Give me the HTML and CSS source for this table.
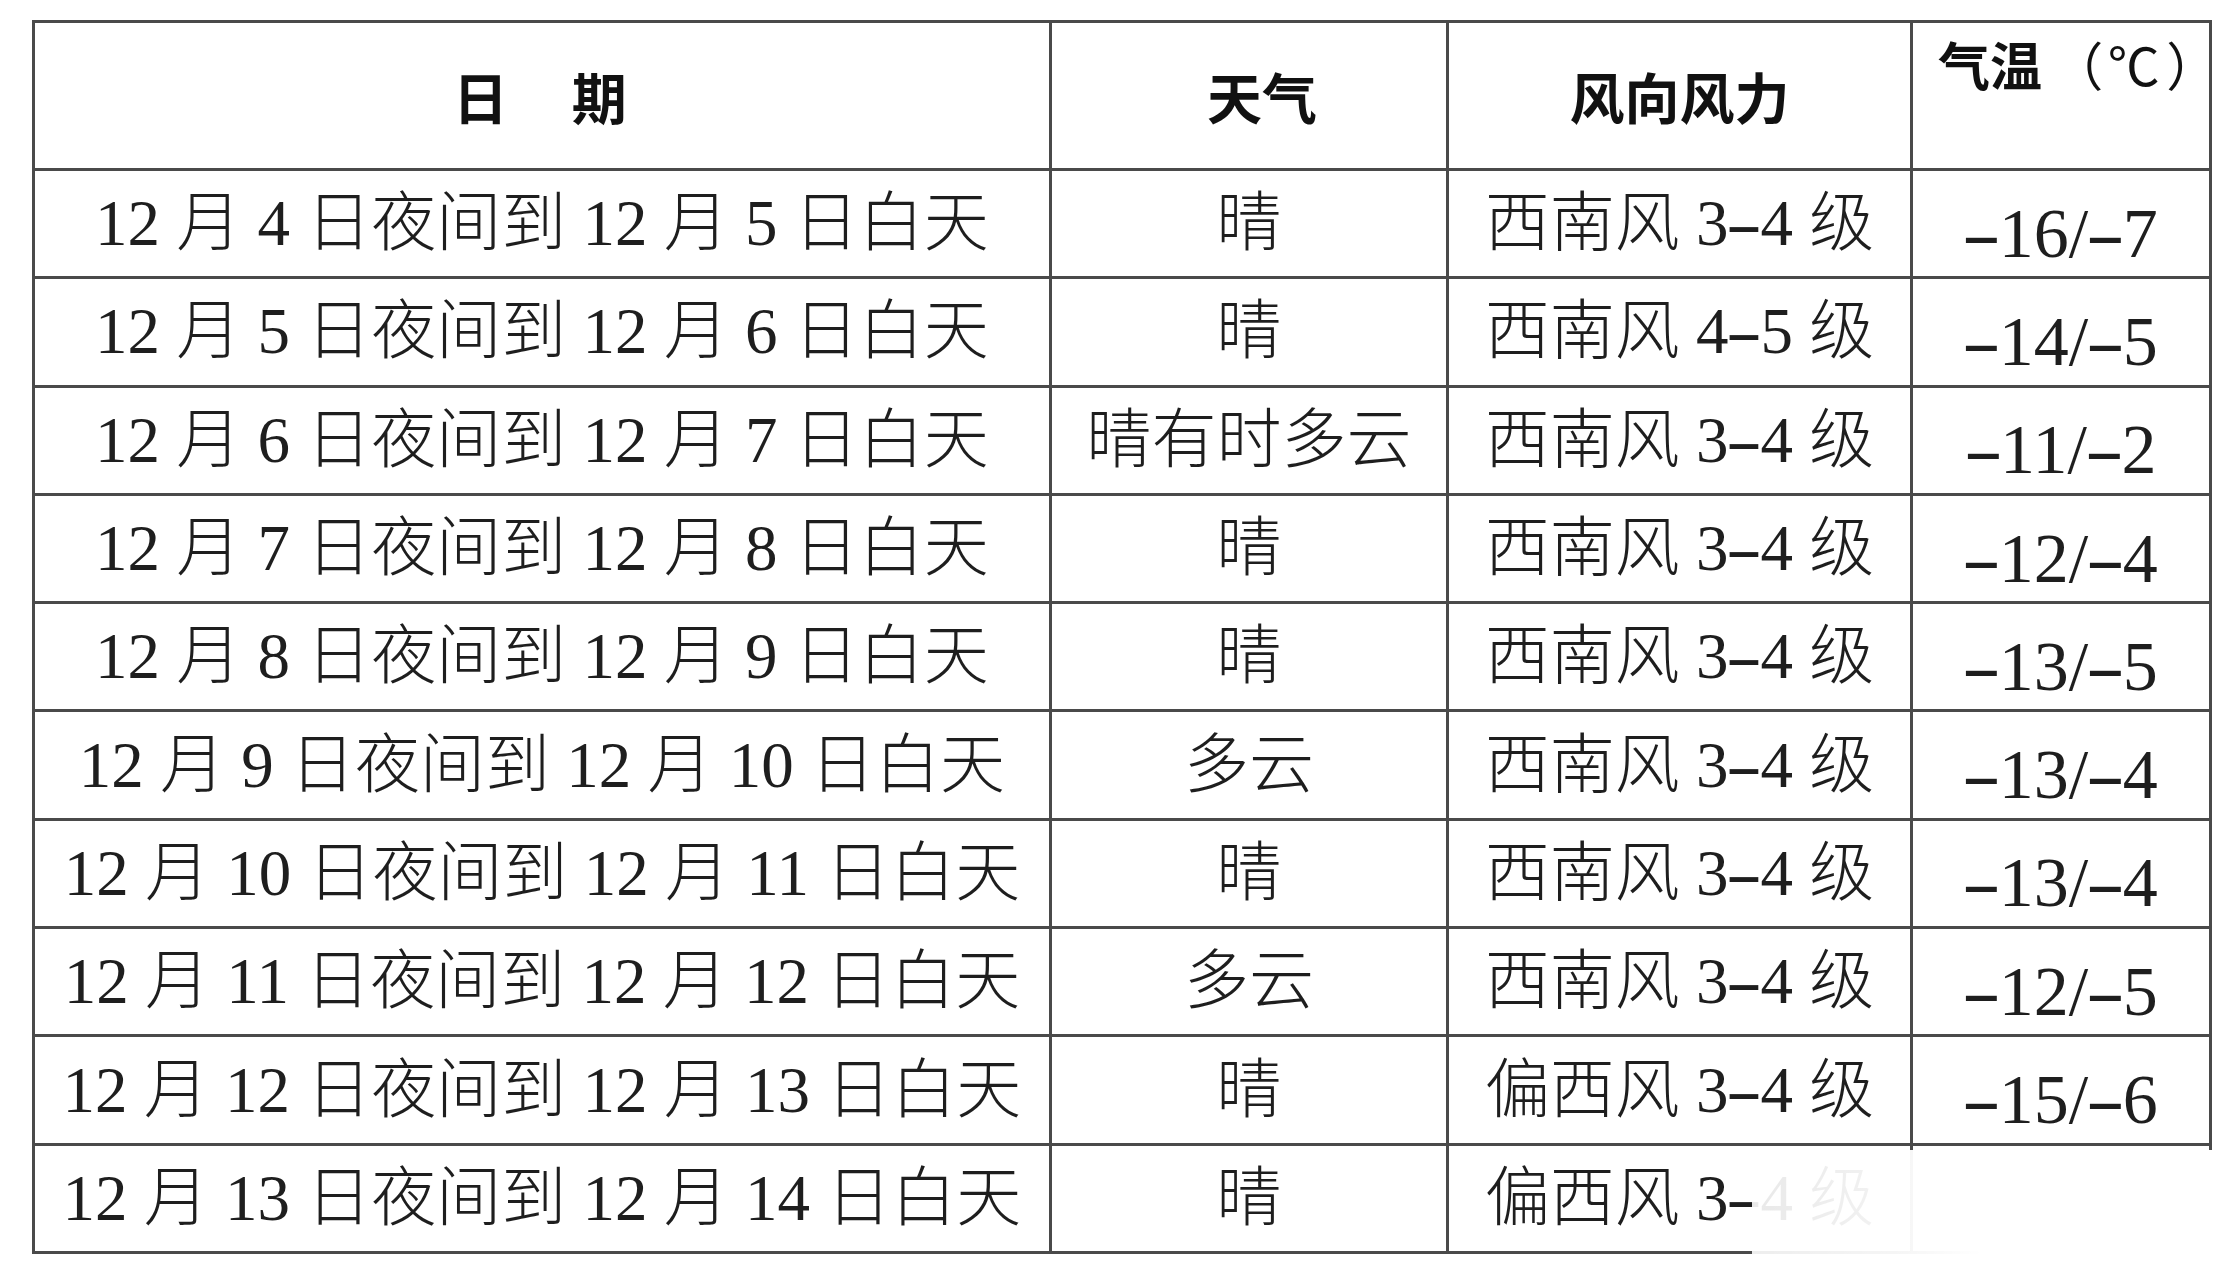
FILE: index.html
```html
<!DOCTYPE html>
<html lang="zh-CN">
<head>
<meta charset="utf-8">
<title>天气预报</title>
<link rel="stylesheet" href="styles.css">
</head>
<body>
<div class="table">
  <div class="cell head"><span class="head-date">日　期</span></div>
  <div class="cell head head-weather">天气</div>
  <div class="cell head">风向风力</div>
  <div class="cell head head-top"><span class="b">气温</span><span class="r"><span class="po">（</span><span class="pc">℃</span><span class="pe">）</span></span></div>

  <div class="cell">12 月 4 日夜间到 12 月 5 日白天</div>
  <div class="cell">晴</div>
  <div class="cell">西南风 3<span class="dash">-</span>4 级</div>
  <div class="cell temp"><span class="dash">-</span>16/<span class="dash">-</span>7</div>

  <div class="cell">12 月 5 日夜间到 12 月 6 日白天</div>
  <div class="cell">晴</div>
  <div class="cell">西南风 4<span class="dash">-</span>5 级</div>
  <div class="cell temp"><span class="dash">-</span>14/<span class="dash">-</span>5</div>

  <div class="cell">12 月 6 日夜间到 12 月 7 日白天</div>
  <div class="cell">晴有时多云</div>
  <div class="cell">西南风 3<span class="dash">-</span>4 级</div>
  <div class="cell temp"><span class="dash">-</span>11/<span class="dash">-</span>2</div>

  <div class="cell">12 月 7 日夜间到 12 月 8 日白天</div>
  <div class="cell">晴</div>
  <div class="cell">西南风 3<span class="dash">-</span>4 级</div>
  <div class="cell temp"><span class="dash">-</span>12/<span class="dash">-</span>4</div>

  <div class="cell">12 月 8 日夜间到 12 月 9 日白天</div>
  <div class="cell">晴</div>
  <div class="cell">西南风 3<span class="dash">-</span>4 级</div>
  <div class="cell temp"><span class="dash">-</span>13/<span class="dash">-</span>5</div>

  <div class="cell">12 月 9 日夜间到 12 月 10 日白天</div>
  <div class="cell">多云</div>
  <div class="cell">西南风 3<span class="dash">-</span>4 级</div>
  <div class="cell temp"><span class="dash">-</span>13/<span class="dash">-</span>4</div>

  <div class="cell">12 月 10 日夜间到 12 月 11 日白天</div>
  <div class="cell">晴</div>
  <div class="cell">西南风 3<span class="dash">-</span>4 级</div>
  <div class="cell temp"><span class="dash">-</span>13/<span class="dash">-</span>4</div>

  <div class="cell">12 月 11 日夜间到 12 月 12 日白天</div>
  <div class="cell">多云</div>
  <div class="cell">西南风 3<span class="dash">-</span>4 级</div>
  <div class="cell temp"><span class="dash">-</span>12/<span class="dash">-</span>5</div>

  <div class="cell">12 月 12 日夜间到 12 月 13 日白天</div>
  <div class="cell">晴</div>
  <div class="cell">偏西风 3<span class="dash">-</span>4 级</div>
  <div class="cell temp"><span class="dash">-</span>15/<span class="dash">-</span>6</div>

  <div class="cell">12 月 13 日夜间到 12 月 14 日白天</div>
  <div class="cell">晴</div>
  <div class="cell">偏西风 3<span class="dash">-</span>4 级</div>
  <div class="cell temp"></div>
</div>
<div class="mask"></div>
</body>
</html>
```

FILE: styles.css
```css
html, body {
  margin: 0;
  padding: 0;
  background: #ffffff;
}

body {
  width: 2226px;
  height: 1280px;
  overflow: hidden;
  position: relative;
  font-family: "Liberation Serif", "Noto Sans CJK SC", serif;
  color: #1e1e1e;
}

.table {
  display: grid;
  grid-template-columns: 1014px 394px 461px 296px;
  grid-template-rows: 145px repeat(10, 105.3px);
  gap: 3px;
  padding: 3px;
  background: #4a4a4a;
  width: max-content;
  margin: 20px 0 0 32px;
}

.cell {
  background: #ffffff;
  display: flex;
  align-items: center;
  justify-content: center;
  white-space: nowrap;
  font-size: 65px;
  font-weight: 300;
  line-height: 1;
}

.head {
  font-family: "Noto Sans CJK SC", sans-serif;
  font-weight: 700;
  font-size: 55px;
  color: #111111;
}

.head-date {
  letter-spacing: 0.08em;
}

.head-weather {
  padding-left: 26px;
}

.head-top {
  align-items: flex-start;
  justify-content: flex-start;
  padding-top: 10px;
  padding-left: 25px;
  font-size: 52px;
  line-height: 1.2;
}

.head-top .r {
  font-weight: 400;
  display: inline-flex;
}

.po {
  display: inline-block;
  width: 1.18em;
  text-align: right;
}

.pc {
  display: inline-block;
  width: 1.17em;
  text-align: center;
}

.pe {
  display: inline-block;
  width: 0.9em;
  padding-left: 0.04em;
  text-align: left;
}

.temp {
  font-size: 70px;
  font-weight: 400;
  padding-top: 20px;
  box-sizing: border-box;
}

.dash {
  display: inline-block;
  transform: scaleX(1.7);
  padding: 0 0.08em;
}

.mask {
  position: absolute;
  left: 1752px;
  top: 1150px;
  width: 474px;
  height: 130px;
  background: linear-gradient(90deg, rgba(255,255,255,0.9) 0px, rgba(255,255,255,0.95) 150px, #ffffff 230px);
}
```
